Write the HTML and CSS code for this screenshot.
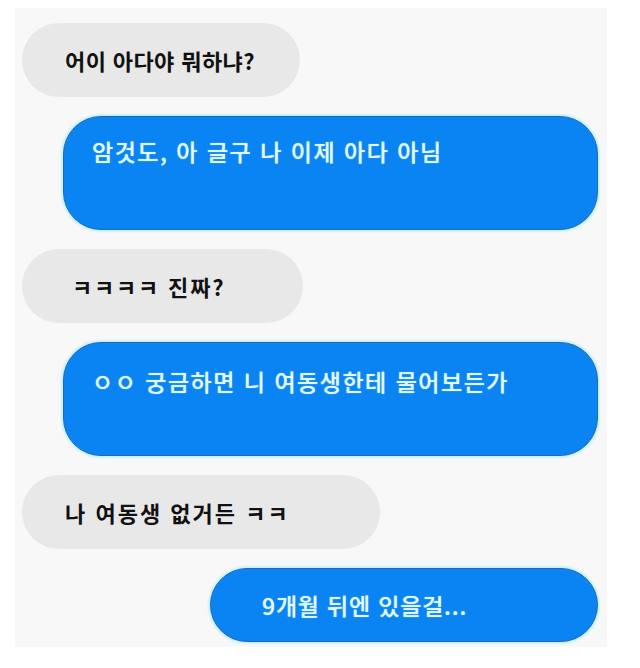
FILE: index.html
```html
<!DOCTYPE html>
<html lang="ko">
  <head>
    <meta charset="UTF-8" />
    <title>chat</title>
    <link rel="stylesheet" href="styles.css">
  </head>
  <body>
    <main class="chat">
      <div class="bubble them">어이 아다야 뭐하냐?</div>
      <div class="bubble me tall">암것도, 아 글구 나 이제 아다 아님</div>
      <div class="bubble them laugh">ㅋㅋㅋㅋ 진짜?</div>
      <div class="bubble me tall low">ㅇㅇ 궁금하면 니 여동생한테 물어보든가</div>
      <div class="bubble them wide">나 여동생 없거든 ㅋㅋ</div>
      <div class="bubble me last">9개월 뒤엔 있을걸...</div>
    </main>
  </body>
</html>
```

FILE: styles.css
```css
body {
  margin: 0;
  background-color: #ffffff;
  font-family: "Noto Sans CJK KR", "Noto Sans", sans-serif;
}

.chat {
  width: 592px;
  height: 639px;
  margin: 8px 0 0 15px;
  padding: 15px 9px 0 7px;
  box-sizing: border-box;
  background-color: #f8f8f8;
  display: flex;
  flex-direction: column;
  gap: 19px;
}

.bubble {
  height: 74px;
  box-sizing: border-box;
  border-radius: 37px;
  display: flex;
  align-items: center;
  line-height: 24px;
  white-space: nowrap;
}

.them {
  align-self: flex-start;
  width: 278px;
  background-color: #e8e8e8;
  color: #111111;
  font-size: 22px;
  font-weight: 700;
  letter-spacing: 0.4px;
  padding-left: 43px;
}

.them.laugh {
  width: 281px;
  padding-left: 50px;
  letter-spacing: 1.8px;
}

.them.wide {
  width: 358px;
  letter-spacing: 2px;
}

.me {
  align-self: flex-end;
  background-color: #0a84f2;
  color: #e2f8ff;
  font-size: 23px;
  font-weight: 500;
  letter-spacing: 1.5px;
  border: 1px solid #2467b0;
  box-shadow: 0 0 2px 2px #c6f1ff;
  text-shadow: 0 0 1px #9fe4ff;
}

.tall {
  width: 535px;
  height: 114px;
  border-radius: 38px;
  align-items: flex-start;
  padding: 22px 0 0 28px;
}

.tall.low {
  padding-top: 26px;
}

.last {
  width: 388px;
  padding-left: 51px;
  letter-spacing: 0.8px;
}
```
